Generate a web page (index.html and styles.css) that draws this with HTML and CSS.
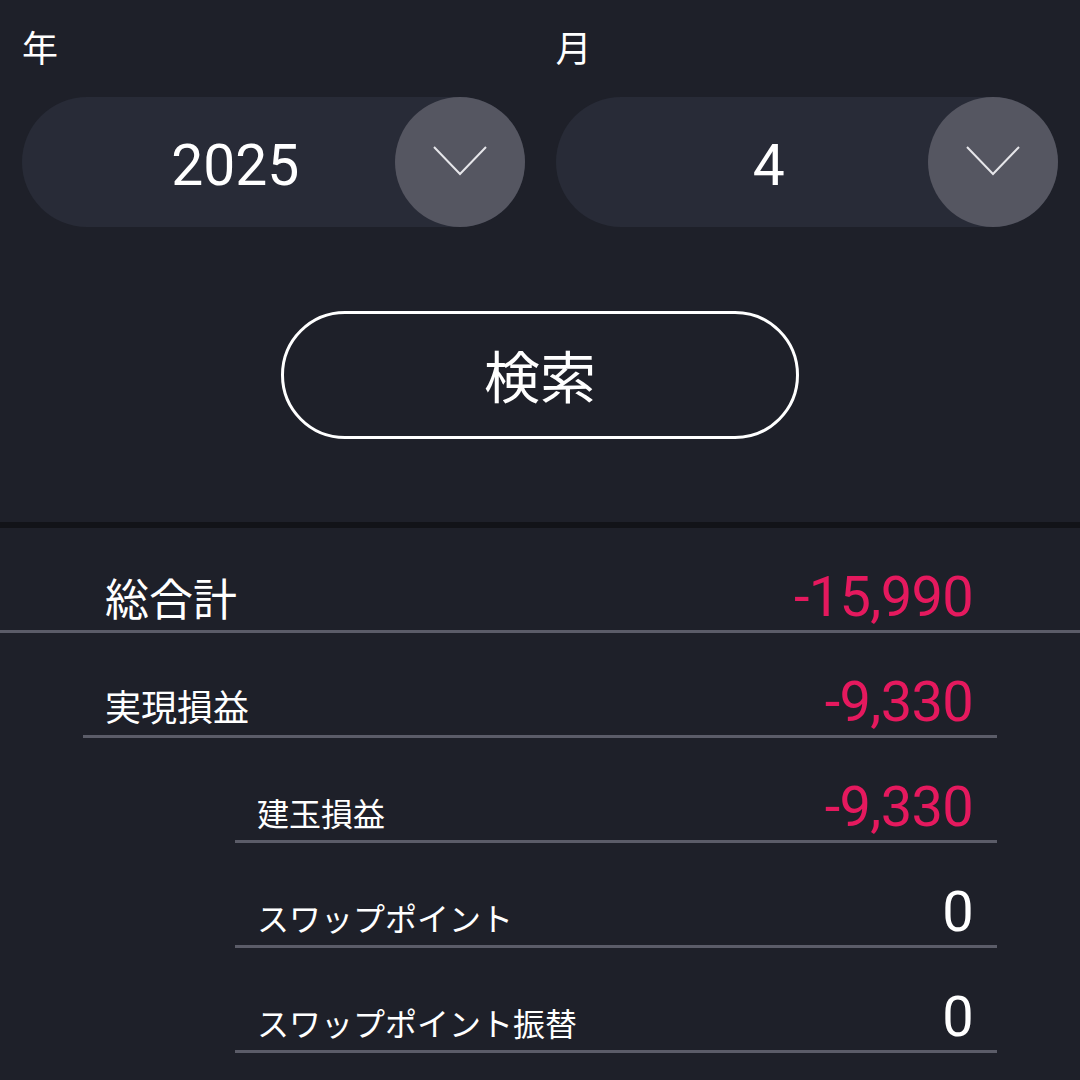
FILE: index.html
```html
<!DOCTYPE html>
<html lang="ja">
<head>
<meta charset="utf-8">
<link rel="stylesheet" href="styles.css">
</head>
<body>
<div class="filters">
  <div class="field">
    <div class="label">年</div>
    <div class="select">
      <div class="select-value">2025</div>
      <div class="select-btn">
        <svg width="54" height="30" viewBox="0 0 54 30"><polyline points="1,1 27,28 53,1" fill="none" stroke="#e6e6ea" stroke-width="2"/></svg>
      </div>
    </div>
  </div>
  <div class="field">
    <div class="label">月</div>
    <div class="select">
      <div class="select-value">4</div>
      <div class="select-btn">
        <svg width="54" height="30" viewBox="0 0 54 30"><polyline points="1,1 27,28 53,1" fill="none" stroke="#e6e6ea" stroke-width="2"/></svg>
      </div>
    </div>
  </div>
</div>
<div class="search-wrap">
  <div class="search-btn">検索</div>
</div>
<div class="divider"></div>
<div class="rows">
  <div class="row row-total">
    <span class="row-label">総合計</span>
    <span class="row-value neg">-15,990</span>
  </div>
  <div class="row row-lv1">
    <span class="row-label">実現損益</span>
    <span class="row-value neg">-9,330</span>
  </div>
  <div class="row row-lv2">
    <span class="row-label">建玉損益</span>
    <span class="row-value neg">-9,330</span>
  </div>
  <div class="row row-lv2">
    <span class="row-label">スワップポイント</span>
    <span class="row-value">0</span>
  </div>
  <div class="row row-lv2">
    <span class="row-label">スワップポイント振替</span>
    <span class="row-value">0</span>
  </div>
</div>
</body>
</html>
```
FILE: styles.css
```css
html, body {
  margin: 0;
  padding: 0;
  background: #1e2029;
  color: #ffffff;
  font-family: "Roboto", "Noto Sans CJK JP", sans-serif;
}
body {
  width: 1080px;
  height: 1080px;
  overflow: hidden;
}
.filters {
  display: grid;
  grid-template-columns: 1fr 1fr;
  column-gap: 31px;
  padding: 30px 22px 0 22px;
}
.label {
  font-size: 36px;
  line-height: 40px;
  height: 40px;
  margin-bottom: 27px;
}
.select {
  display: flex;
  align-items: center;
  height: 130px;
  border-radius: 65px;
  background: #282b37;
}
.select-value {
  flex: 1;
  text-align: center;
  padding-left: 54px;
  padding-top: 6px;
  font-size: 57px;
}
.select-btn {
  width: 130px;
  height: 130px;
  border-radius: 50%;
  background: #555661;
  display: flex;
  align-items: center;
  justify-content: center;
}
.select-btn svg {
  margin-top: -2px;
}
.search-wrap {
  display: flex;
  justify-content: center;
  padding-top: 84px;
  padding-bottom: 83px;
}
.search-btn {
  width: 512px;
  height: 122px;
  border: 3px solid #ffffff;
  border-radius: 64px;
  display: flex;
  align-items: center;
  justify-content: center;
  font-size: 56px;
  padding-bottom: 4px;
  box-sizing: content-box;
  height: 118px;
}
.divider {
  height: 6px;
  background: #121318;
}
.row {
  display: flex;
  align-items: baseline;
  justify-content: space-between;
  box-sizing: border-box;
  height: 105px;
  padding: 41px 24px 0 22px;
  border-bottom: 3px solid #5b5c68;
}
.row-label {
  line-height: 56px;
  font-size: 32px;
}
.row-value {
  line-height: 56px;
  font-size: 56px;
  letter-spacing: -0.7px;
}
.neg {
  color: #e5195e;
}
.row-total {
  padding-left: 105px;
  padding-right: 107px;
}
.row-total .row-label {
  font-size: 44px;
}
.row-lv1 {
  margin: 0 83px;
}
.row-lv1 .row-label {
  font-size: 36px;
}
.row-lv2 {
  margin: 0 83px 0 235px;
}
```
